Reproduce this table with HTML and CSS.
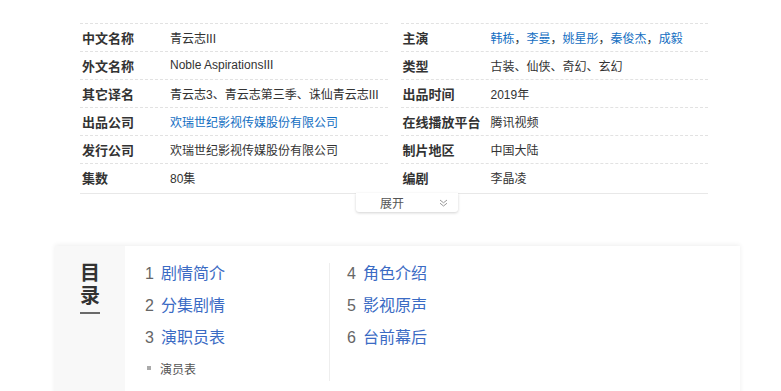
FILE: index.html
```html
<!DOCTYPE html>
<html lang="zh-CN">
<head>
<meta charset="utf-8">
<title>青云志III</title>
<link rel="stylesheet" href="styles.css">
</head>
<body>
<div class="basic-info">
  <dl class="info-col">
    <div class="row"><dt>中文名称</dt><dd>青云志III</dd></div>
    <div class="row"><dt>外文名称</dt><dd>Noble AspirationsIII</dd></div>
    <div class="row"><dt>其它译名</dt><dd>青云志3、青云志第三季、诛仙青云志III</dd></div>
    <div class="row"><dt>出品公司</dt><dd><a class="link">欢瑞世纪影视传媒股份有限公司</a></dd></div>
    <div class="row"><dt>发行公司</dt><dd>欢瑞世纪影视传媒股份有限公司</dd></div>
    <div class="row"><dt>集数</dt><dd>80集</dd></div>
  </dl>
  <dl class="info-col">
    <div class="row"><dt>主演</dt><dd><a class="link">韩栋</a>，<a class="link">李曼</a>，<a class="link">姚星彤</a>，<a class="link">秦俊杰</a>，<a class="link">成毅</a></dd></div>
    <div class="row"><dt>类型</dt><dd>古装、仙侠、奇幻、玄幻</dd></div>
    <div class="row"><dt>出品时间</dt><dd>2019年</dd></div>
    <div class="row"><dt>在线播放平台</dt><dd>腾讯视频</dd></div>
    <div class="row"><dt>制片地区</dt><dd>中国大陆</dd></div>
    <div class="row"><dt>编剧</dt><dd>李晶凌</dd></div>
  </dl>
</div>
<div class="fold">
  <div class="fold-btn"><span class="fold-text">展开</span>
    <svg class="chev" width="9" height="8" viewBox="0 0 9 8"><path d="M1 1 L4.5 3.8 L8 1 M1 4.2 L4.5 7 L8 4.2" fill="none" stroke="#999" stroke-width="1"/></svg>
  </div>
</div>
<div class="catalog">
  <div class="cat-title"><span class="cat-word">目<br>录</span></div>
  <div class="cat-body">
    <ol class="cat-col first">
      <li class="lvl1"><span class="num">1</span><a class="item">剧情简介</a></li>
      <li class="lvl1"><span class="num">2</span><a class="item">分集剧情</a></li>
      <li class="lvl1"><span class="num">3</span><a class="item">演职员表</a></li>
      <li class="lvl2"><span class="dot"></span><a class="sub">演员表</a></li>
    </ol>
    <ol class="cat-col">
      <li class="lvl1"><span class="num">4</span><a class="item">角色介绍</a></li>
      <li class="lvl1"><span class="num">5</span><a class="item">影视原声</a></li>
      <li class="lvl1"><span class="num">6</span><a class="item">台前幕后</a></li>
    </ol>
  </div>
</div>
</body>
</html>
```
FILE: styles.css
```css
html, body {
  margin: 0;
  padding: 0;
  background: #fff;
  font-family: Arial, "Liberation Sans", "Noto Sans CJK SC", sans-serif;
  color: #333;
  overflow: hidden;
}
.basic-info {
  display: flex;
  gap: 13px;
  margin: 23px 0 0 80px;
  width: 628px;
}
.info-col {
  margin: 0;
  flex: 1;
}
.row {
  display: flex;
  align-items: center;
  height: 28px;
  border-top: 1px dashed #e2e2e2;
  box-sizing: border-box;
  padding-bottom: 1px;
}
dt {
  width: 90px;
  padding-left: 2px;
  font-size: 13px;
  font-weight: 700;
  color: #333;
  box-sizing: border-box;
}
dd {
  margin: 0;
  font-size: 12px;
  color: #333;
  white-space: nowrap;
}
.link { color: #136ec2; text-decoration: none; }
.fold {
  margin-top: 2px;
  height: 20px;
  border-top: 1px solid #e8e8e8;
  display: flex;
  justify-content: center;
  width: 628px;
  margin-left: 80px;
}
.fold-btn {
  width: 102px;
  height: 19px;
  margin-top: -1px;
  margin-left: 26px;
  background: #fff;
  box-shadow: 0 1px 3px rgba(0,0,0,0.18);
  border-radius: 0 0 3px 3px;
  display: flex;
  align-items: center;
  box-sizing: border-box;
  padding: 0 10px 0 24px;
  justify-content: space-between;
  font-size: 12px;
  color: #555;
}
.chev { margin-top: 1px; }
.catalog {
  margin: 32px 0 0 55px;
  width: 685px;
  height: 160px;
  display: flex;
  box-shadow: 0 -1px 5px rgba(0,0,0,0.07);
  background: #fff;
}
.cat-title {
  width: 70px;
  background: #f8f8f8;
  display: flex;
  justify-content: center;
  padding-top: 16px;
  box-sizing: border-box;
}
.cat-word {
  display: block;
  font-size: 20px;
  font-weight: 700;
  line-height: 23px;
  color: #333;
  height: 50px;
  width: 20px;
  text-align: center;
  border-bottom: 2px solid #6a6a6a;
}
.cat-body {
  display: flex;
  padding-top: 17px;
}
.cat-col {
  list-style: none;
  margin: 0;
  padding: 0 0 0 17px;
}
.cat-col.first {
  width: 184px;
  padding-left: 20px;
  border-right: 1px solid #eee;
  height: 118px;
}
.lvl1 {
  height: 32px;
  line-height: 22px;
  display: flex;
  align-items: flex-start;
}
.num {
  font-size: 16px;
  color: #666;
  width: 16px;
  font-family: Arial, "Liberation Sans", sans-serif;
}
.item {
  font-size: 16px;
  color: #3b6bc4;
}
.lvl2 {
  height: 24px;
  display: flex;
  align-items: center;
  padding-left: 2px;
  margin-top: -3px;
}
.dot {
  width: 4px;
  height: 4px;
  background: #aaa;
  margin-right: 9px;
}
.sub {
  font-size: 12px;
  color: #555;
}
```
